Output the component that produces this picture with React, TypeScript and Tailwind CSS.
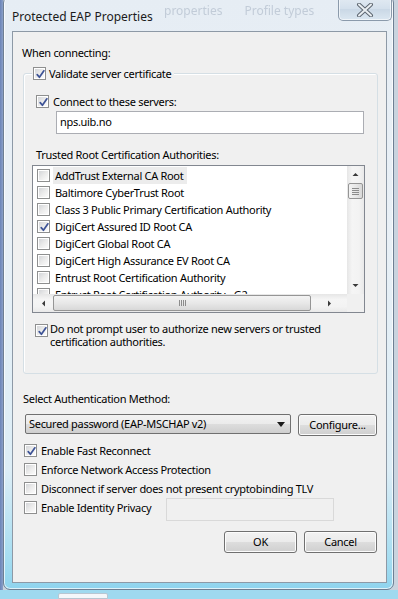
import React from "react";

function Check({ checked = false }: { checked?: boolean }) {
  return (
    <span className="relative inline-flex w-[13px] h-[13px] shrink-0 border border-[#8e8f8f] bg-white p-[1px]">
      <span className="block w-full h-full bg-gradient-to-br from-[#d4d6d9] via-[#ebebeb] to-[#fbfbfb]" />
      {checked && (
        <svg className="absolute left-[1px] top-[1px]" width="11" height="11" viewBox="0 0 11 11">
          <path d="M2.2 5.6 L4.4 8.3 L8.9 1.8" stroke="#3d5396" strokeWidth="1.7" fill="none" strokeLinecap="round" strokeLinejoin="round" />
        </svg>
      )}
    </span>
  );
}

function Button({ label, className = "" }: { label: string; className?: string }) {
  return (
    <div
      className={`flex items-center justify-center rounded-[3px] border border-[#707070] bg-[linear-gradient(#f2f2f2_0%,#ebebeb_50%,#dddddd_51%,#cfcfcf_100%)] shadow-[inset_0_0_0_1px_#fcfcfc] ${className}`}
    >
      {label}
    </div>
  );
}

function Arrow({ dir }: { dir: "up" | "down" | "left" | "right" }) {
  const pts = {
    up: "0.5,4 3.5,1 6.5,4",
    down: "0.5,1 3.5,4 6.5,1",
    left: "4,0.5 1,3.5 4,6.5",
    right: "1,0.5 4,3.5 1,6.5",
  }[dir];
  const vert = dir === "up" || dir === "down";
  return (
    <svg width={vert ? 7 : 5} height={vert ? 5 : 7} viewBox={vert ? "0 0 7 5" : "0 0 5 7"}>
      <polygon points={pts} fill="#3a3a3a" />
    </svg>
  );
}

const certs: [string, boolean][] = [
  ["AddTrust External CA Root", false],
  ["Baltimore CyberTrust Root", false],
  ["Class 3 Public Primary Certification Authority", false],
  ["DigiCert Assured ID Root CA", true],
  ["DigiCert Global Root CA", false],
  ["DigiCert High Assurance EV Root CA", false],
  ["Entrust Root Certification Authority", false],
  ["Entrust Root Certification Authority - G2", false],
];

export default function App() {
  return (
    <div className="relative w-[398px] h-[599px] overflow-hidden bg-[linear-gradient(90deg,#6b84b8_0px,#8aa0c8_3px,#c9d3de_3px)] font-['Noto_Sans',sans-serif] text-[11px] tracking-[-0.3px] text-black">
      {/* desktop strip below the window */}
      <div className="absolute left-0 right-0 bottom-0 h-[9px] bg-[#9fd9ef]">
        <div className="ml-[58px] mt-[3px] h-[6px] w-[50px] rounded-t-[2px] bg-[#f4f7fa] border border-[#b7c6d2]" />
      </div>

      {/* window */}
      <div className="absolute left-[3px] top-[-4px] w-[391px] h-[594px] rounded-[7px] border border-[#6e7f93] bg-[linear-gradient(#e6edf4_0%,#e9f0f6_40%,#dcedf6_80%,#a5ddf1_95%,#8fd4ee_100%)] shadow-[inset_0_0_0_1px_rgba(255,255,255,0.7)] flex flex-col">
        {/* title bar */}
        <div className="relative h-[34px] shrink-0">
          <div className="absolute left-[160px] top-[5px] flex gap-[22px] text-[12px] text-[#c2ccd8] blur-[0.7px] whitespace-nowrap tracking-normal">
            <span>properties</span>
            <span>Profile types</span>
          </div>
          <div className="absolute left-[8px] top-[12px] text-[12px] leading-[16px] text-[#1b1b1b] tracking-normal">
            Protected EAP Properties
          </div>
          <div className="absolute left-[334px] top-0 w-[54px] h-[24px] rounded-b-[5px] border border-t-0 border-[#8b9aab] bg-[linear-gradient(#e3ebf3,#d4e0ec_50%,#c9d7e5_51%,#dbe7f1)] shadow-[inset_0_0_0_1px_rgba(255,255,255,0.6)] flex items-center justify-center pt-[3px]">
            <svg width="20" height="14" viewBox="0 0 20 14">
              <path d="M4 1.5 L16 12.5 M16 1.5 L4 12.5" stroke="#5d6670" strokeWidth="4" strokeLinecap="round" />
              <path d="M4 1.5 L16 12.5 M16 1.5 L4 12.5" stroke="#e9eef2" strokeWidth="2" strokeLinecap="round" />
            </svg>
          </div>
        </div>

        {/* client area */}
        <div className="ml-[8px] w-[375px] h-[552px] border border-[#8d99a6] bg-[#f0f0f0] flex flex-col">
          <div className="ml-[9px] mt-[13px] leading-[15px]">When connecting:</div>

          {/* group box */}
          <div className="relative ml-[10px] mt-[13px] w-[355px] h-[301px] rounded-[3px] border border-[#d5dfe5] shadow-[inset_1px_1px_0_#ffffff] flex flex-col">
            <div className="absolute left-[8px] top-[-7px] flex items-center gap-[3px] bg-[#f0f0f0] pl-[1px] pr-[3px] leading-[13px]">
              <Check checked />
              <span>Validate server certificate</span>
            </div>

            <div className="ml-[12px] mt-[21px] flex items-center gap-[4px] leading-[13px]">
              <Check checked />
              <span>Connect to these servers:</span>
            </div>
            <div className="ml-[32px] mt-[3px] w-[308px] h-[23px] border border-[#abadb3] border-t-[#abadb3] bg-white flex items-center pl-[3px] pb-[1px]">
              nps.uib.no
            </div>

            <div className="ml-[12px] mt-[13px] leading-[15px]">Trusted Root Certification Authorities:</div>

            {/* list box */}
            <div className="ml-[8px] mt-[3px] w-[333px] h-[148px] border border-[#828790] bg-white flex flex-col">
              <div className="flex h-[128px]">
                <div className="flex-1 overflow-hidden pt-[1px]">
                  {certs.map(([name, on], i) => (
                    <div key={name} className="flex items-center h-[17px] pl-[4px] whitespace-nowrap">
                      <Check checked={on} />
                      <span className={`ml-[3px] pl-[2px] pr-[4px] leading-[17px] ${i === 0 ? "bg-[#ececec]" : ""}`}>{name}</span>
                    </div>
                  ))}
                </div>
                {/* vertical scrollbar */}
                <div className="w-[17px] bg-[linear-gradient(90deg,#e6e6e6,#f5f5f5_30%,#f3f3f3_70%,#e9e9e9)] flex flex-col items-center">
                  <div className="h-[17px] flex items-center justify-center"><Arrow dir="up" /></div>
                  <div className="w-[15px] h-[16px] rounded-[2px] border border-[#959595] bg-[linear-gradient(90deg,#f3f3f3,#e8e8e8_50%,#d8d8d8)] flex flex-col items-center justify-center gap-[1px]">
                    <span className="block w-[7px] h-[1px] bg-[#8c8c8c]" />
                    <span className="block w-[7px] h-[1px] bg-[#8c8c8c]" />
                    <span className="block w-[7px] h-[1px] bg-[#8c8c8c]" />
                    <span className="block w-[7px] h-[1px] bg-[#8c8c8c]" />
                  </div>
                  <div className="flex-1" />
                  <div className="h-[17px] flex items-center justify-center"><Arrow dir="down" /></div>
                </div>
              </div>
              {/* horizontal scrollbar */}
              <div className="flex h-[18px]">
                <div className="flex-1 flex items-center bg-[linear-gradient(#e6e6e6,#f5f5f5_30%,#f3f3f3_70%,#e9e9e9)]">
                  <div className="w-[20px] flex items-center justify-center"><Arrow dir="left" /></div>
                  <div className="w-[258px] h-[16px] rounded-[2px] border border-[#959595] bg-[linear-gradient(#f3f3f3,#e8e8e8_50%,#d8d8d8)] flex items-center justify-center gap-[1px]">
                    <span className="block w-[1px] h-[6px] bg-[#8c8c8c]" />
                    <span className="block w-[1px] h-[6px] bg-[#8c8c8c]" />
                    <span className="block w-[1px] h-[6px] bg-[#8c8c8c]" />
                    <span className="block w-[1px] h-[6px] bg-[#8c8c8c]" />
                  </div>
                  <div className="flex-1 flex items-center justify-center"><Arrow dir="right" /></div>
                </div>
                <div className="w-[17px] bg-[#f0f0f0]" />
              </div>
            </div>

            <div className="ml-[11px] mt-[9px] flex items-start gap-[2px]">
              <span className="mt-[1px]"><Check checked /></span>
              <span className="leading-[13px]">
                Do not prompt user to authorize new servers or trusted
                <br />
                certification authorities.
              </span>
            </div>
          </div>

          <div className="ml-[10px] mt-[17px] leading-[15px]">Select Authentication Method:</div>
          <div className="ml-[12px] mt-[8px] flex items-start">
            <div className="w-[266px] h-[20px] rounded-[2px] border border-[#707070] bg-[linear-gradient(#f2f2f2_0%,#ebebeb_50%,#dddddd_51%,#cfcfcf_100%)] flex items-center pl-[3px] pr-[5px]">
              <span className="flex-1">Secured password (EAP-MSCHAP v2)</span>
              <svg width="8" height="5" viewBox="0 0 8 5"><polygon points="0,0 8,0 4,5" fill="#1a1a1a" /></svg>
            </div>
            <Button label="Configure..." className="ml-[7px] w-[79px] h-[22px]" />
          </div>

          <div className="ml-[11px] mt-[8px] flex flex-col gap-[6px]">
            {[
              ["Enable Fast Reconnect", true],
              ["Enforce Network Access Protection", false],
              ["Disconnect if server does not present cryptobinding TLV", false],
            ].map(([t, on]) => (
              <div key={t as string} className="flex items-center gap-[4px] leading-[13px]">
                <Check checked={on as boolean} />
                <span>{t as string}</span>
              </div>
            ))}
            <div className="flex items-start">
              <div className="flex items-center gap-[4px] leading-[13px] w-[142px]">
                <Check />
                <span>Enable Identity Privacy</span>
              </div>
              <div className="mt-[-3px] w-[168px] h-[23px] border border-[#d9d9d9] bg-[#f0f0f0]" />
            </div>
          </div>

          <div className="mt-[10px] mr-[9px] flex justify-end gap-[7px]">
            <Button label="OK" className="w-[73px] h-[22px]" />
            <Button label="Cancel" className="w-[73px] h-[22px]" />
          </div>
        </div>
      </div>
    </div>
  );
}
